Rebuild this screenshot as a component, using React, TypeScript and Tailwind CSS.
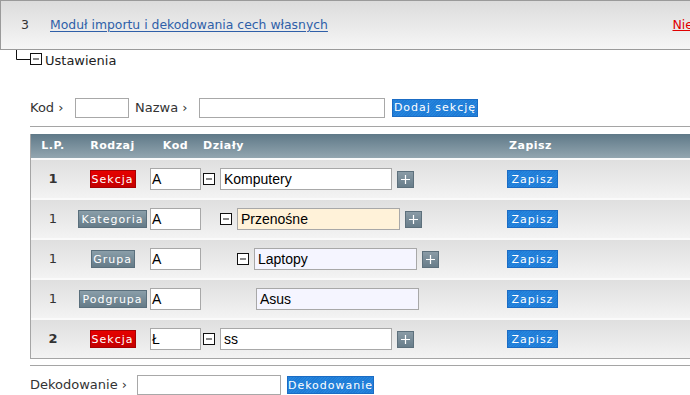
import React from "react";

const font = "font-['DejaVu_Sans','Verdana',sans-serif]";
const inputFont = "font-['Liberation_Sans','Arial',sans-serif] text-[14px]";

const blueBtn =
  "inline-flex items-center justify-center h-[18px] border border-[#1b6cc4] bg-[#2383dc] bg-[repeating-linear-gradient(135deg,#2585de_0px,#2585de_1px,#1f7bd5_1px,#1f7bd5_2px)] text-white text-[11px] tracking-[1px] leading-none";

type Row = {
  lp: string;
  bold: boolean;
  kind: "Sekcja" | "Kategoria" | "Grupa" | "Podgrupa";
  kod: string;
  level: number;
  toggle: boolean;
  plus: boolean;
  name: string;
  bg: string;
};

const rows: Row[] = [
  { lp: "1", bold: true, kind: "Sekcja", kod: "A", level: 0, toggle: true, plus: true, name: "Komputery", bg: "bg-white" },
  { lp: "1", bold: false, kind: "Kategoria", kod: "A", level: 1, toggle: true, plus: true, name: "Przenośne", bg: "bg-[#fff2d9]" },
  { lp: "1", bold: false, kind: "Grupa", kod: "A", level: 2, toggle: true, plus: true, name: "Laptopy", bg: "bg-[#f5f5ff]" },
  { lp: "1", bold: false, kind: "Podgrupa", kod: "A", level: 3, toggle: false, plus: false, name: "Asus", bg: "bg-[#f5f5ff]" },
  { lp: "2", bold: true, kind: "Sekcja", kod: "Ł", level: 0, toggle: true, plus: true, name: "ss", bg: "bg-white" },
];

function Badge({ kind }: { kind: Row["kind"] }) {
  const red = kind === "Sekcja";
  const widths: Record<Row["kind"], string> = {
    Sekcja: "w-[46px]",
    Kategoria: "w-[69px]",
    Grupa: "w-[44px]",
    Podgrupa: "w-[68px]",
  };
  return (
    <span
      className={`inline-flex items-center justify-center h-[18px] text-[11px] tracking-[1px] text-white leading-none ${widths[kind]} ${
        red
          ? "bg-gradient-to-b from-[#e60000] to-[#c40000] border border-[#a80000]"
          : "bg-gradient-to-b from-[#8a9ea9] to-[#657b88] border border-[#5a6f7c]"
      }`}
    >
      {kind}
    </span>
  );
}

function MinusBox() {
  return (
    <svg width="12" height="12" viewBox="0 0 12 12" className="shrink-0">
      <rect x="0.5" y="0.5" width="11" height="11" fill="white" stroke="#111" />
      <path d="M3 6H9" stroke="#111" strokeWidth="1" />
    </svg>
  );
}

function PlusBtn() {
  return (
    <span className="inline-flex items-center justify-center w-[17px] h-[17px] border border-[#5d707c] bg-gradient-to-b from-[#8a9ba6] to-[#687d8a]">
      <svg width="9" height="9" viewBox="0 0 9 9">
        <path d="M4.5 0V9M0 4.5H9" stroke="white" strokeWidth="1.2" />
      </svg>
    </span>
  );
}

export default function App() {
  return (
    <div className={`w-[690px] h-[395px] overflow-hidden bg-white text-[12px] text-[#222] ${font}`}>
      {/* Top bar */}
      <div className="h-[50px] w-[720px] border-t border-l border-b border-[#9a9a9a] bg-gradient-to-b from-[#dcdcdc] to-[#f6f6f6] flex items-center">
        <span className="ml-[20px] w-[29px] text-[12.5px] text-[#333]">3</span>
        <a className="text-[12.4px] text-[#2f5fa8] underline underline-offset-2 decoration-1">Moduł importu i dekodowania cech własnych</a>
        <a className="ml-auto mr-[27px] text-[12.5px] text-[#e00000] underline">Nie</a>
      </div>

      {/* Tree */}
      <div className="flex items-start h-[40px]">
        <svg width="42" height="16" viewBox="0 0 42 16" className="shrink-0">
          <path d="M16.5 -1V9.5H30" stroke="#111" fill="none" />
          <rect x="30.5" y="3.5" width="11" height="11" fill="white" stroke="#111" />
          <path d="M33 9H39" stroke="#111" />
        </svg>
        <span className="ml-[3px] mt-[1px] text-[13px] text-[#222]">Ustawienia</span>
      </div>

      {/* Add section form */}
      <div className="pl-[30px] pt-[8px] flex items-center h-[27px]">
        <span className="w-[45px] text-[13px] text-[#333]">Kod ›</span>
        <span className="w-[54px] h-[20px] border border-[#a8a8a8] bg-white" />
        <span className="ml-[6px] w-[64px] text-[13px] text-[#333]">Nazwa ›</span>
        <span className="w-[186px] h-[20px] border border-[#a8a8a8] bg-white" />
        <span className={`${blueBtn} ml-[7px] w-[86px]`}>Dodaj sekcję</span>
      </div>

      <div className="ml-[30px] mt-[9px] w-[700px] border-t border-[#a5a5a5]" />

      {/* Table */}
      <div className="ml-[30px] mt-[7px] w-[700px] border-l border-b border-[#a5a5a5]">
        <div className="h-[24px] flex items-center bg-gradient-to-b from-[#5f7988] to-[#93a6b0] text-white text-[11px] font-bold tracking-[0.5px]">
          <span className="w-[44px] text-center">L.P.</span>
          <span className="w-[75px] text-center">Rodzaj</span>
          <span className="w-[51px] text-center">Kod</span>
          <span className="ml-[2px] w-[306px]">Działy</span>
          <span>Zapisz</span>
        </div>
        {rows.map((r, i) => (
          <div
            key={i}
            className="h-[40px] flex items-center bg-gradient-to-b from-[#dfdfdf] to-[#f3f3f3] border-t-2 border-[#fafafa]"
          >
            <span className={`w-[44px] text-center text-[13px] text-[#333] ${r.bold ? "font-bold" : ""}`}>{r.lp}</span>
            <span className="w-[75px] flex justify-center">
              <Badge kind={r.kind} />
            </span>
            <span className={`w-[51px] h-[22px] border border-[#a8a8a8] bg-white leading-[20px] pl-[1px] text-black ${inputFont}`}>
              {r.kod}
            </span>
            <span className="ml-[2px] w-[304px] flex items-center">
              {r.toggle ? (
                <span className="flex items-center" style={{ marginLeft: r.level * 17 }}>
                  <MinusBox />
                </span>
              ) : (
                <span style={{ marginLeft: r.level * 17 - 3 }} />
              )}
              <span
                className={`ml-[5px] h-[22px] border border-[#a8a8a8] leading-[20px] pl-[3px] text-black ${inputFont} ${r.bg} ${
                  r.level === 0 ? "w-[172px]" : "w-[163px]"
                }`}
              >
                {r.name}
              </span>
              {r.plus && (
                <span className="ml-[5px] flex">
                  <PlusBtn />
                </span>
              )}
            </span>
            <span className={`${blueBtn} w-[51px]`}>Zapisz</span>
          </div>
        ))}
      </div>

      <div className="ml-[30px] mt-[6px] w-[700px] border-t border-[#a5a5a5]" />

      {/* Decode */}
      <div className="pl-[30px] mt-[9px] flex items-center">
        <span className="w-[107px] text-[13px] text-[#333]">Dekodowanie ›</span>
        <span className="w-[144px] h-[20px] border border-[#a8a8a8] bg-white" />
        <span className={`${blueBtn} ml-[6px] w-[87px]`}>Dekodowanie</span>
      </div>
    </div>
  );
}
